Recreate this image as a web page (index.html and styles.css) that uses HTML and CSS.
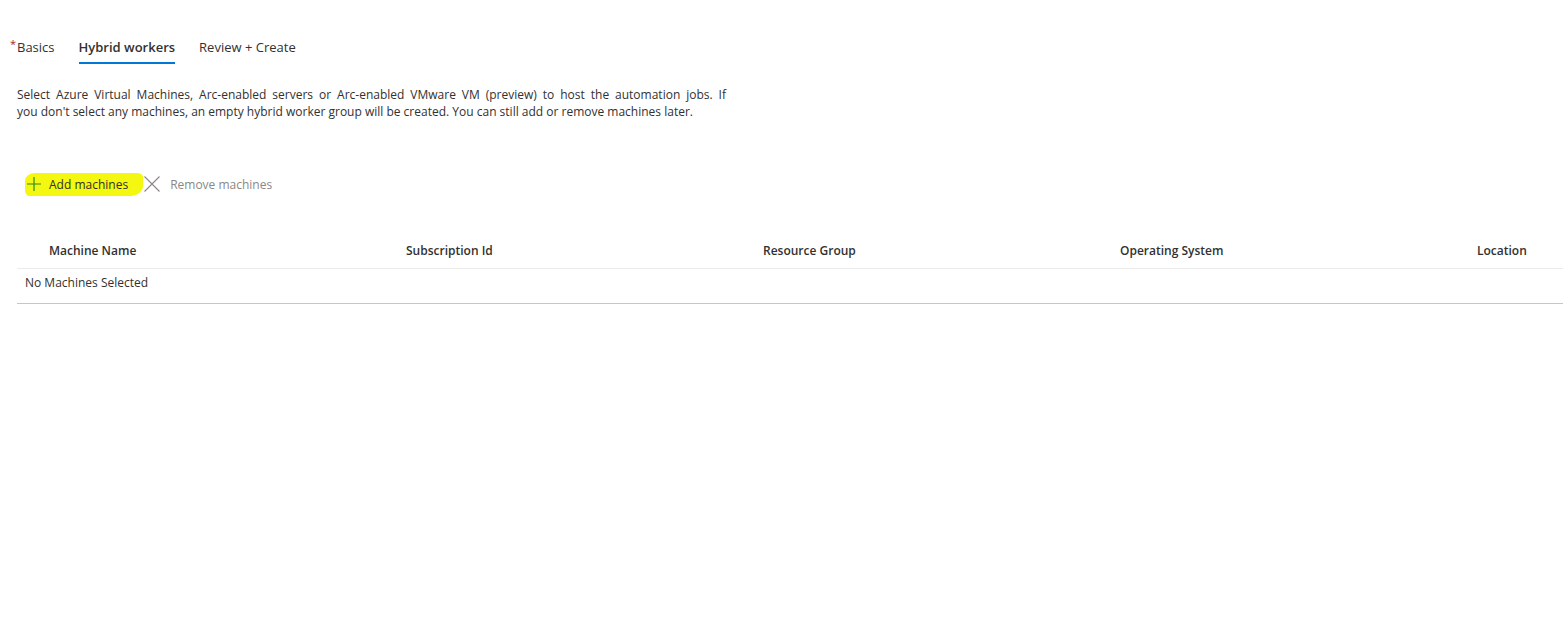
FILE: index.html
```html
<!DOCTYPE html>
<html lang="en">
  <head>
    <meta charset="UTF-8" />
    <meta name="viewport" content="width=device-width, initial-scale=1.0" />
    <title>Create hybrid worker group</title>
    <link rel="stylesheet" href="styles.css">
  </head>
  <body>
    <div class="page">
      <nav class="tabs">
        <div class="tab"><span class="required">*</span>Basics</div>
        <div class="tab active">Hybrid workers</div>
        <div class="tab">Review + Create</div>
      </nav>

      <p class="intro">
        <span class="line full">Select Azure Virtual Machines, Arc-enabled servers or Arc-enabled VMware VM (preview) to host the automation jobs. If</span>
        <span class="line">you don't select any machines, an empty hybrid worker group will be created. You can still add or remove machines later.</span>
      </p>

      <div class="toolbar">
        <button class="tool-btn add">
          <svg width="16" height="16" viewBox="0 0 16 16">
            <path d="M8 1v14M1 8h14" stroke="#2a8a23" stroke-width="1.2" fill="none" />
          </svg>
          <span>Add machines</span>
        </button>
        <button class="tool-btn remove" disabled>
          <svg width="18" height="18" viewBox="0 0 18 18">
            <path d="M1.5 1.5l15 15M16.5 1.5l-15 15" stroke="#8a8886" stroke-width="1.1" fill="none" />
          </svg>
          <span>Remove machines</span>
        </button>
      </div>

      <div class="grid-wrap">
        <div class="grid">
          <div class="grid-head">
            <div class="col">Machine Name</div>
            <div class="col">Subscription Id</div>
            <div class="col">Resource Group</div>
            <div class="col">Operating System</div>
            <div class="col">Location</div>
          </div>
          <div class="grid-empty">No Machines Selected</div>
        </div>
      </div>
    </div>
  </body>
</html>
```

FILE: styles.css
```css
* {
  margin: 0;
  padding: 0;
  box-sizing: border-box;
}

body {
  font-family: "Open Sans", "Noto Sans", sans-serif;
  background: #fff;
  color: #323130;
  overflow: hidden;
  width: 1563px;
  height: 632px;
}

.page {
  padding: 36px 0 0 17px;
}

/* tabs */
.tabs {
  display: flex;
  gap: 24px;
  height: 28px;
}

.tab {
  position: relative;
  font-size: 13px;
  line-height: 22px;
  color: #323130;
  padding-bottom: 4px;
}

.tab.active {
  font-weight: 600;
  border-bottom: 2px solid #0078d4;
}

.required {
  position: absolute;
  left: -7px;
  top: -3px;
  color: #a4262c;
  font-size: 11px;
}

/* description */
.intro {
  width: 709px;
  margin-top: 22px;
  font-size: 12px;
  line-height: 17px;
  color: #323130;
}

.intro .line {
  display: block;
}

.intro .full {
  text-align: justify;
  text-align-last: justify;
}

/* toolbar */
.toolbar {
  display: flex;
  align-items: center;
  margin-top: 52px;
  padding-left: 8px;
  height: 24px;
}

.tool-btn {
  display: flex;
  align-items: center;
  gap: 7px;
  border: none;
  background: none;
  font-family: inherit;
  font-size: 12px;
  color: #323130;
  cursor: pointer;
}

.tool-btn.add {
  padding: 3px 15px 3px 1px;
  background: #f4f70f;
  border-radius: 10px 6px 12px 4px / 8px 4px 10px 6px;
}

.tool-btn.remove {
  color: #8a8886;
  gap: 9px;
  cursor: default;
}

/* grid */
.grid-wrap {
  margin-top: 39px;
  overflow: hidden;
}

.grid {
  width: 1785px;
}

.grid-head {
  display: grid;
  grid-template-columns: repeat(5, 357px);
  border-bottom: 1px solid #edebe9;
  height: 34px;
}

.col {
  padding-left: 32px;
  font-size: 12px;
  font-weight: 600;
  line-height: 32px;
  color: #323130;
}

.grid-empty {
  padding: 0 0 7px 8px;
  font-size: 12px;
  line-height: 28px;
  border-bottom: 1px solid #c8c6c4;
  height: 35px;
}
```
